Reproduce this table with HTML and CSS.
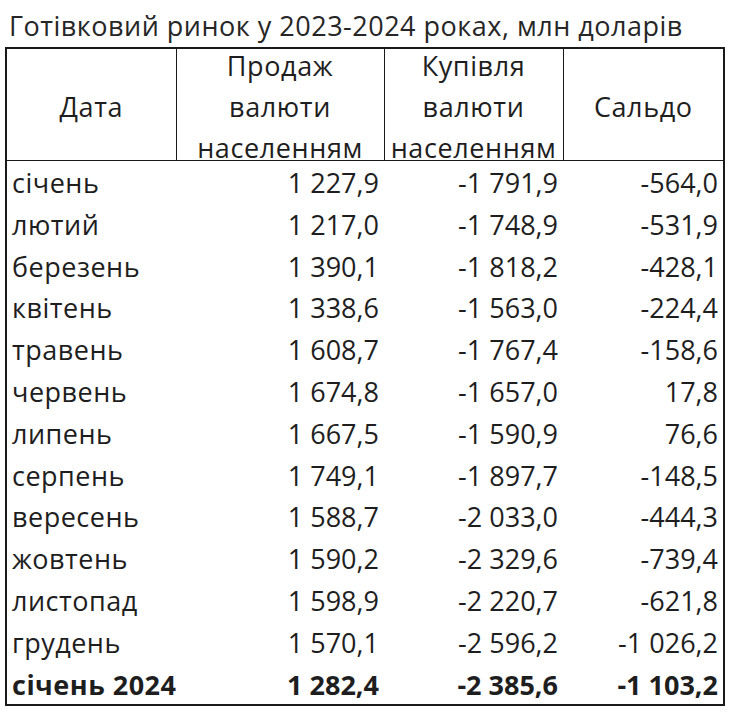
FILE: index.html
```html
<!DOCTYPE html>
<html lang="uk">
<head>
<meta charset="utf-8">
<title>Готівковий ринок</title>
<link rel="stylesheet" href="styles.css">
</head>
<body>
<div class="page">
  <h1 class="title">Готівковий ринок у 2023-2024 роках, млн доларів</h1>
  <table class="grid">
    <colgroup>
      <col class="c1"><col class="c2"><col class="c3"><col class="c4">
    </colgroup>
    <thead>
      <tr>
        <th><div class="hd single">Дата</div></th>
        <th><div class="hd">Продаж<br>валюти<br>населенням</div></th>
        <th><div class="hd">Купівля<br>валюти<br>населенням</div></th>
        <th><div class="hd single">Сальдо</div></th>
      </tr>
    </thead>
    <tbody>
      <tr><td>січень</td><td>1 227,9</td><td>-1 791,9</td><td>-564,0</td></tr>
      <tr><td>лютий</td><td>1 217,0</td><td>-1 748,9</td><td>-531,9</td></tr>
      <tr><td>березень</td><td>1 390,1</td><td>-1 818,2</td><td>-428,1</td></tr>
      <tr><td>квітень</td><td>1 338,6</td><td>-1 563,0</td><td>-224,4</td></tr>
      <tr><td>травень</td><td>1 608,7</td><td>-1 767,4</td><td>-158,6</td></tr>
      <tr><td>червень</td><td>1 674,8</td><td>-1 657,0</td><td>17,8</td></tr>
      <tr><td>липень</td><td>1 667,5</td><td>-1 590,9</td><td>76,6</td></tr>
      <tr><td>серпень</td><td>1 749,1</td><td>-1 897,7</td><td>-148,5</td></tr>
      <tr><td>вересень</td><td>1 588,7</td><td>-2 033,0</td><td>-444,3</td></tr>
      <tr><td>жовтень</td><td>1 590,2</td><td>-2 329,6</td><td>-739,4</td></tr>
      <tr><td>листопад</td><td>1 598,9</td><td>-2 220,7</td><td>-621,8</td></tr>
      <tr><td>грудень</td><td>1 570,1</td><td>-2 596,2</td><td>-1 026,2</td></tr>
      <tr class="total"><td>січень 2024</td><td>1 282,4</td><td>-2 385,6</td><td>-1 103,2</td></tr>
    </tbody>
  </table>
</div>
</body>
</html>
```

FILE: styles.css
```css
html, body {
  margin: 0;
  padding: 0;
  background: #ffffff;
}
body {
  font-family: "Open Sans", "Noto Sans", sans-serif;
  color: #1e1e1e;
}
.page {
  padding: 0 0 0 5px;
}
.title {
  margin: 0;
  padding: 11px 0 0 4px;
  height: 47px;
  box-sizing: border-box;
  font-size: 27px;
  font-weight: normal;
  line-height: 30px;
  letter-spacing: 0.5px;
  white-space: nowrap;
  color: #262626;
}
.grid {
  border-collapse: collapse;
  table-layout: fixed;
  width: 718px;
  border: 2px solid #1a1a1a;
  font-size: 27px;
}
.c1 { width: 170px; }
.c2 { width: 208px; }
.c3 { width: 179px; }
.c4 { width: 161px; }
th {
  padding: 0;
  font-weight: normal;
  text-align: center;
  vertical-align: top;
  border-left: 1.5px solid #1a1a1a;
  border-bottom: 1.5px solid #1a1a1a;
  height: 111px;
  letter-spacing: 0.6px;
}
.hd {
  margin-top: -4px;
  height: 115px;
  line-height: 41px;
}
.hd.single {
  padding-top: 41px;
  height: 74px;
}
td {
  height: 39.8px;
  padding: 2px 5px 0 5px;
  text-align: right;
  line-height: 39.8px;
  white-space: nowrap;
}
td:first-child {
  text-align: left;
  letter-spacing: 0.5px;
}
.total td {
  font-weight: bold;
}
```
